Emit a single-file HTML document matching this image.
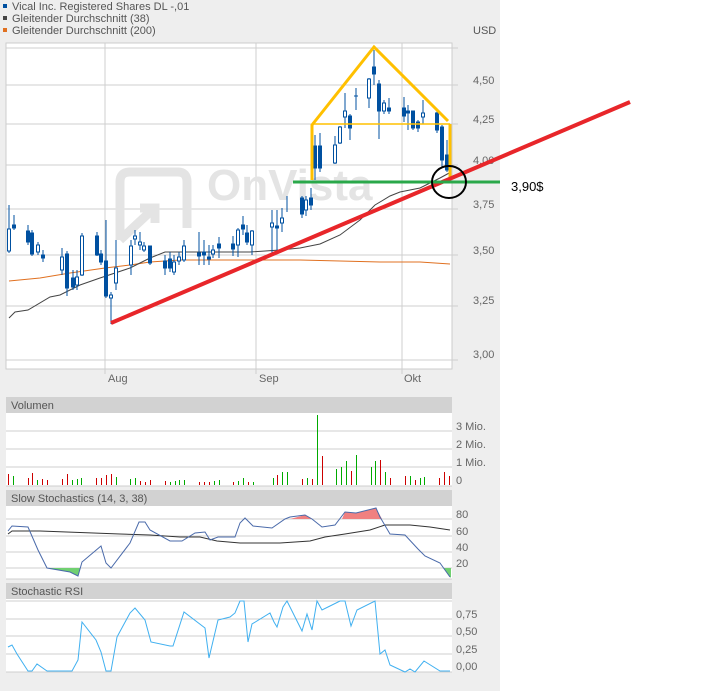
<!DOCTYPE html>
<html><head><meta charset="utf-8"><style>
html,body{margin:0;padding:0;background:#fff}
svg{display:block;font-family:"Liberation Sans",sans-serif}
</style></head><body>
<svg width="718" height="691" xmlns="http://www.w3.org/2000/svg">
<rect x="0" y="0" width="500" height="691" fill="#eeeeee"/>
<!-- legend -->
<rect x="3" y="4" width="4" height="4" fill="#0050a0"/>
<rect x="3" y="16" width="4" height="4" fill="#444"/>
<rect x="3" y="28" width="4" height="4" fill="#e07020"/>
<g font-size="11" fill="#555">
<text x="12" y="10">Vical Inc. Registered Shares DL -,01</text>
<text x="12" y="22">Gleitender Durchschnitt (38)</text>
<text x="12" y="34">Gleitender Durchschnitt (200)</text>
<text x="473" y="34">USD</text>
</g>
<!-- main plot -->
<rect x="6" y="43" width="446" height="326" fill="#fff" stroke="#ccc"/>
<g stroke="#cfcfcf" stroke-width="1">
<line x1="6" y1="48" x2="458" y2="48"/><line x1="6" y1="85" x2="458" y2="85"/>
<line x1="6" y1="124" x2="458" y2="124"/><line x1="6" y1="165" x2="458" y2="165"/>
<line x1="6" y1="209" x2="458" y2="209"/><line x1="6" y1="255" x2="458" y2="255"/>
<line x1="6" y1="306" x2="458" y2="306"/><line x1="6" y1="360" x2="458" y2="360"/>
<line x1="105" y1="43" x2="105" y2="374"/><line x1="256" y1="43" x2="256" y2="374"/><line x1="402" y1="43" x2="402" y2="374"/>
</g>
<!-- watermark -->
<path d="M120 240 V182 Q120 172 130 172 H178 Q187 172 187 182 V228" fill="none" stroke="#e4e4e4" stroke-width="9"/>
<path d="M120 240 L150 212 M140 208 H155 V223" fill="none" stroke="#e4e4e4" stroke-width="9"/>
<text x="207" y="200" font-size="44" font-weight="bold" fill="#e4e4e4">OnVista</text>
<g font-size="11" fill="#666">
<text x="473" y="84">4,50</text><text x="473" y="123">4,25</text><text x="473" y="164">4,00</text>
<text x="473" y="208">3,75</text><text x="473" y="254">3,50</text><text x="473" y="304">3,25</text>
<text x="473" y="358">3,00</text>
<text x="108" y="382">Aug</text><text x="259" y="382">Sep</text><text x="404" y="382">Okt</text>
</g>
<!-- MAs -->
<polyline fill="none" stroke="#e07020" stroke-width="1" points="9,281 40,278 70,273 105,268 130,265 150,262 180,260 220,260 260,260 300,260 340,261 380,262 420,262 450,264"/>
<polyline fill="none" stroke="#444" stroke-width="1" points="9,318 15,312 28,310 50,297 60,295 80,285 100,278 130,268 150,258 165,252 180,252 250,252 280,250 300,248 320,244 340,235 360,220 375,205 390,196 400,192 420,188 440,178 451,172"/>
<!-- candles -->
<g stroke="#0050a0" stroke-width="1" fill="#0050a0">
<line x1="9" y1="205" x2="9" y2="253"/><rect x="7.5" y="229" width="3" height="22" fill="#fff"/>
<line x1="14" y1="215" x2="14" y2="230"/><rect x="12.5" y="225" width="3" height="3"/>
<line x1="28" y1="225" x2="28" y2="245"/><rect x="26.5" y="231" width="3" height="11"/>
<line x1="32" y1="230" x2="32" y2="256"/><rect x="30.5" y="233" width="3" height="21"/>
<line x1="38" y1="242" x2="38" y2="255"/><rect x="36.5" y="245" width="3" height="7" fill="#fff"/>
<line x1="43" y1="250" x2="43" y2="262"/><rect x="41.5" y="255" width="3" height="3"/>
<line x1="62" y1="248" x2="62" y2="275"/><rect x="60.5" y="257" width="3" height="13" fill="#fff"/>
<line x1="67" y1="251" x2="67" y2="296"/><rect x="65.5" y="254" width="3" height="34"/>
<line x1="73" y1="270" x2="73" y2="290"/><rect x="71.5" y="278" width="3" height="9"/>
<line x1="77" y1="270" x2="77" y2="290"/><rect x="75.5" y="277" width="3" height="8" fill="#fff"/>
<line x1="82" y1="233" x2="82" y2="276"/><rect x="80.5" y="236" width="3" height="39" fill="#fff"/>
<line x1="97" y1="232" x2="97" y2="256"/><rect x="95.5" y="236" width="3" height="19"/>
<line x1="101" y1="250" x2="101" y2="265"/><rect x="99.5" y="254" width="3" height="8"/>
<line x1="106" y1="220" x2="106" y2="298"/><rect x="104.5" y="261" width="3" height="35"/>
<line x1="111" y1="292" x2="111" y2="324"/><rect x="109.5" y="295" width="3" height="3" fill="#fff"/>
<line x1="116" y1="240" x2="116" y2="290"/><rect x="114.5" y="268" width="3" height="15" fill="#fff"/>
<line x1="131" y1="240" x2="131" y2="275"/><rect x="129.5" y="246" width="3" height="19" fill="#fff"/>
<line x1="135" y1="230" x2="135" y2="245"/><rect x="133.5" y="236" width="3" height="3" fill="#fff"/>
<line x1="140" y1="232" x2="140" y2="250"/><rect x="138.5" y="242" width="3" height="3" fill="#fff"/>
<line x1="144" y1="242" x2="144" y2="252"/><rect x="142.5" y="246" width="3" height="4" fill="#fff"/>
<line x1="150" y1="246" x2="150" y2="265"/><rect x="148.5" y="246" width="3" height="17"/>
<line x1="165" y1="255" x2="165" y2="275"/><rect x="163.5" y="261" width="3" height="7"/>
<line x1="170" y1="252" x2="170" y2="272"/><rect x="168.5" y="259" width="3" height="9"/>
<line x1="174" y1="255" x2="174" y2="275"/><rect x="172.5" y="262" width="3" height="10" fill="#fff"/>
<line x1="179" y1="252" x2="179" y2="265"/><rect x="177.5" y="257" width="3" height="4" fill="#fff"/>
<line x1="184" y1="240" x2="184" y2="262"/><rect x="182.5" y="246" width="3" height="14" fill="#fff"/>
<line x1="199" y1="232" x2="199" y2="265"/><rect x="197.5" y="253" width="3" height="3"/>
<line x1="204" y1="240" x2="204" y2="265"/><rect x="202.5" y="252" width="3" height="3"/>
<line x1="209" y1="245" x2="209" y2="265"/><rect x="207.5" y="257" width="3" height="2"/>
<line x1="213" y1="245" x2="213" y2="258"/><rect x="211.5" y="250" width="3" height="4" fill="#fff"/>
<line x1="219" y1="237" x2="219" y2="258"/><rect x="217.5" y="244" width="3" height="4"/>
<line x1="233" y1="236" x2="233" y2="256"/><rect x="231.5" y="244" width="3" height="5"/>
<line x1="238" y1="228" x2="238" y2="257"/><rect x="236.5" y="230" width="3" height="15" fill="#fff"/>
<line x1="243" y1="216" x2="243" y2="235"/><rect x="241.5" y="225" width="3" height="4"/>
<line x1="247" y1="225" x2="247" y2="245"/><rect x="245.5" y="233" width="3" height="9"/>
<line x1="252" y1="230" x2="252" y2="255"/><rect x="250.5" y="231" width="3" height="14" fill="#fff"/>
<line x1="272" y1="210" x2="272" y2="253"/><rect x="270.5" y="223" width="3" height="4" fill="#fff"/>
<line x1="277" y1="210" x2="277" y2="253"/><rect x="275.5" y="226" width="3" height="2"/>
<line x1="282" y1="208" x2="282" y2="232"/><rect x="280.5" y="218" width="3" height="5" fill="#fff"/>
<line x1="287" y1="196" x2="287" y2="212"/>
<line x1="302" y1="196" x2="302" y2="218"/><rect x="300.5" y="198" width="3" height="16"/>
<line x1="306" y1="196" x2="306" y2="216"/><rect x="304.5" y="200" width="3" height="10" fill="#fff"/>
<line x1="311" y1="188" x2="311" y2="210"/><rect x="309.5" y="198" width="3" height="7"/>
<line x1="315" y1="135" x2="315" y2="180"/><rect x="313.5" y="146" width="3" height="22"/>
<line x1="320" y1="133" x2="320" y2="172"/><rect x="318.5" y="146" width="3" height="22"/>
<line x1="335" y1="136" x2="335" y2="164"/><rect x="333.5" y="145" width="3" height="18" fill="#fff"/>
<line x1="340" y1="126" x2="340" y2="144"/><rect x="338.5" y="127" width="3" height="16" fill="#fff"/>
<line x1="345" y1="93" x2="345" y2="128"/><rect x="343.5" y="111" width="3" height="6" fill="#fff"/>
<line x1="350" y1="114" x2="350" y2="140"/><rect x="348.5" y="116" width="3" height="12"/>
<line x1="356" y1="88" x2="356" y2="110"/><line x1="354" y1="96" x2="358" y2="96"/>
<line x1="369" y1="78" x2="369" y2="108"/><rect x="367.5" y="79" width="3" height="19" fill="#fff"/>
<line x1="374" y1="50" x2="374" y2="85"/><rect x="372.5" y="67" width="3" height="7"/>
<line x1="379" y1="80" x2="379" y2="139"/><rect x="377.5" y="84" width="3" height="27"/>
<line x1="384" y1="100" x2="384" y2="114"/><rect x="382.5" y="103" width="3" height="8" fill="#fff"/>
<line x1="389" y1="98" x2="389" y2="114"/><rect x="387.5" y="108" width="3" height="3"/>
<line x1="404" y1="97" x2="404" y2="122"/><rect x="402.5" y="108" width="3" height="8"/>
<line x1="408" y1="105" x2="408" y2="130"/><rect x="406.5" y="111" width="3" height="2"/>
<line x1="413" y1="111" x2="413" y2="130"/><rect x="411.5" y="111" width="3" height="17"/>
<line x1="418" y1="120" x2="418" y2="132"/><rect x="416.5" y="122" width="3" height="6"/>
<line x1="423" y1="100" x2="423" y2="124"/><rect x="421.5" y="113" width="3" height="4" fill="#fff"/>
<line x1="437" y1="110" x2="437" y2="133"/><rect x="435.5" y="113" width="3" height="17"/>
<line x1="442" y1="125" x2="442" y2="168"/><rect x="440.5" y="127" width="3" height="33"/>
<line x1="447" y1="140" x2="447" y2="172"/><rect x="445.5" y="155" width="3" height="15"/>
</g>
<!-- annotations -->
<polyline fill="none" stroke="#ffc000" stroke-width="3" points="312,180 312,125 374,47 448,121"/>
<polyline fill="none" stroke="#ffc000" stroke-width="3" points="450,124 450,180"/>
<line x1="312" y1="124" x2="450" y2="124" stroke="#ffc000" stroke-width="1.5"/>
<line x1="111" y1="323" x2="630" y2="102" stroke="#e8262a" stroke-width="4"/>
<line x1="293" y1="182" x2="500" y2="182" stroke="#2aa84a" stroke-width="3"/>
<ellipse cx="449" cy="182" rx="17" ry="16" fill="none" stroke="#000" stroke-width="2"/>
<text x="511" y="191" font-size="13" fill="#000">3,90$</text>
<!-- volume panel -->
<rect x="6" y="397" width="446" height="16" fill="#d2d2d2"/>
<text x="11" y="409" font-size="11" fill="#555">Volumen</text>
<rect x="6" y="413" width="446" height="73" fill="#fff"/>
<g stroke="#cfcfcf"><line x1="6" y1="431" x2="452" y2="431"/><line x1="6" y1="449" x2="452" y2="449"/><line x1="6" y1="467" x2="452" y2="467"/><line x1="6" y1="486" x2="452" y2="486"/></g>
<g font-size="11" fill="#666"><text x="456" y="430">3 Mio.</text><text x="456" y="448">2 Mio.</text><text x="456" y="466">1 Mio.</text><text x="456" y="484">0</text></g>
<g stroke-width="1">
<g stroke="#cc0000"><line x1="8.5" y1="474" x2="8.5" y2="485"/><line x1="28.5" y1="478" x2="28.5" y2="485"/><line x1="32.5" y1="473" x2="32.5" y2="485"/><line x1="42.5" y1="479" x2="42.5" y2="485"/><line x1="47.5" y1="480" x2="47.5" y2="485"/><line x1="62.5" y1="479" x2="62.5" y2="485"/><line x1="67.5" y1="474" x2="67.5" y2="485"/><line x1="96.5" y1="478" x2="96.5" y2="485"/><line x1="101.5" y1="478" x2="101.5" y2="485"/><line x1="106.5" y1="475" x2="106.5" y2="485"/><line x1="111.5" y1="474" x2="111.5" y2="485"/><line x1="140.5" y1="481" x2="140.5" y2="485"/><line x1="145.5" y1="482" x2="145.5" y2="485"/><line x1="150.5" y1="480" x2="150.5" y2="485"/><line x1="165.5" y1="481" x2="165.5" y2="485"/><line x1="199.5" y1="482" x2="199.5" y2="485"/><line x1="204.5" y1="482" x2="204.5" y2="485"/><line x1="209.5" y1="482" x2="209.5" y2="485"/><line x1="233.5" y1="482" x2="233.5" y2="485"/><line x1="248.5" y1="482" x2="248.5" y2="485"/><line x1="277.5" y1="475" x2="277.5" y2="485"/><line x1="302.5" y1="479" x2="302.5" y2="485"/><line x1="312.5" y1="479" x2="312.5" y2="485"/><line x1="322.5" y1="456" x2="322.5" y2="485"/><line x1="351.5" y1="471" x2="351.5" y2="485"/><line x1="380.5" y1="460" x2="380.5" y2="485"/><line x1="390.5" y1="478" x2="390.5" y2="485"/><line x1="405.5" y1="476" x2="405.5" y2="485"/><line x1="415.5" y1="480" x2="415.5" y2="485"/><line x1="439.5" y1="478" x2="439.5" y2="485"/><line x1="444.5" y1="472" x2="444.5" y2="485"/><line x1="449.5" y1="476" x2="449.5" y2="485"/></g>
<g stroke="#00aa00"><line x1="13.5" y1="476" x2="13.5" y2="485"/><line x1="37.5" y1="480" x2="37.5" y2="485"/><line x1="72.5" y1="480" x2="72.5" y2="485"/><line x1="77.5" y1="479" x2="77.5" y2="485"/><line x1="81.5" y1="478" x2="81.5" y2="485"/><line x1="116.5" y1="477" x2="116.5" y2="485"/><line x1="130.5" y1="479" x2="130.5" y2="485"/><line x1="135.5" y1="478" x2="135.5" y2="485"/><line x1="170.5" y1="482" x2="170.5" y2="485"/><line x1="175.5" y1="481" x2="175.5" y2="485"/><line x1="179.5" y1="480" x2="179.5" y2="485"/><line x1="184.5" y1="480" x2="184.5" y2="485"/><line x1="214.5" y1="481" x2="214.5" y2="485"/><line x1="219.5" y1="480" x2="219.5" y2="485"/><line x1="238.5" y1="481" x2="238.5" y2="485"/><line x1="243.5" y1="478" x2="243.5" y2="485"/><line x1="253.5" y1="482" x2="253.5" y2="485"/><line x1="273.5" y1="478" x2="273.5" y2="485"/><line x1="282.5" y1="472" x2="282.5" y2="485"/><line x1="287.5" y1="472" x2="287.5" y2="485"/><line x1="307.5" y1="478" x2="307.5" y2="485"/><line x1="317.5" y1="415" x2="317.5" y2="485"/><line x1="336.5" y1="469" x2="336.5" y2="485"/><line x1="341.5" y1="467" x2="341.5" y2="485"/><line x1="346.5" y1="461" x2="346.5" y2="485"/><line x1="356.5" y1="455" x2="356.5" y2="485"/><line x1="371.5" y1="467" x2="371.5" y2="485"/><line x1="375.5" y1="461" x2="375.5" y2="485"/><line x1="385.5" y1="472" x2="385.5" y2="485"/><line x1="410.5" y1="476" x2="410.5" y2="485"/><line x1="420.5" y1="478" x2="420.5" y2="485"/><line x1="424.5" y1="477" x2="424.5" y2="485"/></g>
</g>
<!-- slow stochastics -->
<rect x="6" y="490" width="446" height="16" fill="#d2d2d2"/>
<text x="11" y="502" font-size="11" fill="#555">Slow Stochastics (14, 3, 38)</text>
<rect x="6" y="506" width="446" height="73" fill="#fff"/>
<g stroke="#cfcfcf"><line x1="6" y1="519" x2="452" y2="519"/><line x1="6" y1="536" x2="452" y2="536"/><line x1="6" y1="552" x2="452" y2="552"/><line x1="6" y1="568" x2="452" y2="568"/><line x1="6" y1="579" x2="452" y2="579"/></g>
<g font-size="11" fill="#666"><text x="456" y="518">80</text><text x="456" y="535">60</text><text x="456" y="551">40</text><text x="456" y="567">20</text></g>
<polygon points="290,519 305,515 312,519" fill="#f08080"/>
<polygon points="342,519 345,512 356,513 376,508 382,519" fill="#f08080"/>
<polygon points="47,568 70,572 78,576 80,568" fill="#70d070"/>
<polygon points="443,568 451,568 451,578" fill="#70d070"/>
<polyline fill="none" stroke="#333" stroke-width="1" points="8,534 12,531 40,531 120,534 150,535 180,537 200,537 217,541 240,543 280,543 310,541 325,537 345,534 370,530 385,525 410,525 430,527 450,530"/>
<polyline fill="none" stroke="#4a6aaa" stroke-width="1" points="8,531 12,526 28,527 38,550 47,568 70,572 78,576 82,562 101,546 106,563 111,568 130,543 139,522 145,522 150,530 170,541 182,541 195,533 205,532 210,540 218,537 235,537 240,523 245,518 253,526 272,528 285,519 290,517 305,515 312,519 322,527 335,525 345,512 356,513 376,508 380,517 390,534 405,535 418,549 425,556 440,563 450,577"/>
<!-- stochastic rsi -->
<rect x="6" y="583" width="446" height="16" fill="#d2d2d2"/>
<text x="11" y="595" font-size="11" fill="#555">Stochastic RSI</text>
<rect x="6" y="599" width="446" height="73" fill="#fff"/>
<g stroke="#cfcfcf"><line x1="6" y1="601" x2="452" y2="601"/><line x1="6" y1="619" x2="452" y2="619"/><line x1="6" y1="636" x2="452" y2="636"/><line x1="6" y1="654" x2="452" y2="654"/><line x1="6" y1="672" x2="452" y2="672"/></g>
<g font-size="11" fill="#666"><text x="456" y="618">0,75</text><text x="456" y="635">0,50</text><text x="456" y="653">0,25</text><text x="456" y="670">0,00</text></g>
<polyline fill="none" stroke="#40b0f0" stroke-width="1" points="8,647 12,645 17,654 28,671 32,671 37,664 47,671 72,671 78,660 82,622 96,640 101,652 106,671 111,671 117,637 130,613 135,608 145,620 151,642 170,646 173,646 184,612 205,628 209,658 218,620 230,617 235,613 240,601 244,601 248,642 252,624 270,613 274,622 277,627 283,607 287,601 302,631 307,614 312,630 317,601 322,610 330,606 340,601 345,601 351,626 357,610 375,601 380,654 385,650 390,665 405,672 410,669 415,672 424,661 440,671 450,671"/>
</svg>
</body></html>
